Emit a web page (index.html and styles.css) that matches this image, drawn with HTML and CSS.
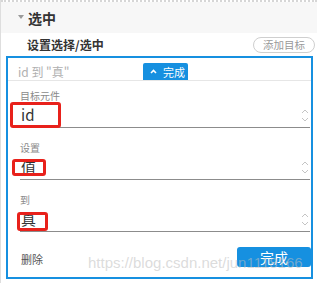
FILE: index.html
```html
<!DOCTYPE html>
<html lang="zh">
<head>
<meta charset="utf-8">
<link rel="stylesheet" href="styles.css">
</head>
<body>
<div class="page">
  <div class="dots"></div>
  <div class="header">
    <svg class="tri" width="6" height="5" viewBox="0 0 6 5"><polygon points="0,0 6,0 3,4" fill="#9a9a9a"/></svg>
    <span class="header-title">选中</span>
  </div>
  <div class="sub">
    <span class="sub-title">设置选择/选中</span>
    <span class="add-btn">添加目标</span>
  </div>
  <div class="panel">
    <div class="summary">
      <span class="summary-text">id 到 "真"</span>
      <span class="tab">
        <svg width="7" height="5" viewBox="0 0 7 5"><polyline points="1,4 3.5,1.5 6,4" fill="none" stroke="#fff" stroke-width="1.6"/></svg>
        <span>完成</span>
      </span>
    </div>
    <div class="field first">
      <div class="label">目标元件</div>
      <div class="value-row">
        <span class="value">id</span>
        <svg class="spin" width="8" height="15" viewBox="0 0 8 15"><polyline points="1,5 4,2 7,5" fill="none" stroke="#c4c4c4" stroke-width="1"/><polyline points="1,10 4,13 7,10" fill="none" stroke="#c4c4c4" stroke-width="1"/></svg>
        <span class="mark mark1"></span>
      </div>
    </div>
    <div class="field">
      <div class="label">设置</div>
      <div class="value-row">
        <span class="value">值</span>
        <svg class="spin" width="8" height="15" viewBox="0 0 8 15"><polyline points="1,5 4,2 7,5" fill="none" stroke="#c4c4c4" stroke-width="1"/><polyline points="1,10 4,13 7,10" fill="none" stroke="#c4c4c4" stroke-width="1"/></svg>
        <span class="mark mark2"></span>
      </div>
    </div>
    <div class="field">
      <div class="label">到</div>
      <div class="value-row">
        <span class="value">真</span>
        <svg class="spin" width="8" height="15" viewBox="0 0 8 15"><polyline points="1,5 4,2 7,5" fill="none" stroke="#c4c4c4" stroke-width="1"/><polyline points="1,10 4,13 7,10" fill="none" stroke="#c4c4c4" stroke-width="1"/></svg>
        <span class="mark mark3"></span>
      </div>
    </div>
    <div class="footer">
      <span class="delete">删除</span>
      <span class="done-btn">完成</span>
    </div>
  </div>
  <div class="watermark">https://blog.csdn.net/jun1118166</div>
</div>
</body>
</html>
```
FILE: styles.css
```css
html, body {
  margin: 0;
  padding: 0;
  background: #fff;
}
body {
  width: 317px;
  height: 283px;
  overflow: hidden;
  font-family: "Noto Sans CJK SC", "Liberation Sans", sans-serif;
  color: #333;
}
.page {
  position: relative;
  height: 283px;
  border-left: 1px solid #dedede;
  box-sizing: border-box;
}
.dots {
  height: 0;
  border-top: 2px dotted #d6d6d6;
}
.header {
  height: 31px;
  background: #f7f7f7;
  display: flex;
  align-items: center;
  padding-left: 17px;
  gap: 4px;
}
.header-title {
  font-size: 14px;
  font-weight: bold;
  line-height: 16px;
  color: #333;
}
.sub {
  height: 23px;
  display: flex;
  align-items: center;
  justify-content: space-between;
  padding-left: 26px;
  padding-right: 2px;
}
.sub-title {
  font-size: 12px;
  font-weight: bold;
  line-height: 14px;
  color: #333;
}
.add-btn {
  width: 62px;
  height: 16px;
  box-sizing: border-box;
  border: 1px solid #cfcfcf;
  border-radius: 8px;
  font-size: 10.5px;
  line-height: 14px;
  color: #999;
  text-align: center;
}
.panel {
  margin-left: 5px;
  width: 307px;
  height: 223px;
  box-sizing: border-box;
  border: 2px solid #1690e0;
  display: flex;
  flex-direction: column;
}
.summary {
  position: relative;
  height: 22px;
  border-bottom: 1px solid #e6e6e6;
  padding-left: 10px;
}
.summary-text {
  font-size: 12px;
  line-height: 17px;
  color: #b0b0b0;
}
.tab {
  position: absolute;
  left: 135px;
  top: 5px;
  width: 45px;
  height: 17px;
  background: #1690e0;
  border-radius: 2px 2px 0 0;
  display: flex;
  align-items: center;
  gap: 6px;
  padding-left: 7px;
  box-sizing: border-box;
  color: #fff;
  font-size: 11px;
  line-height: 14px;
}
.field {
  margin-top: 13px;
  margin-left: 12px;
  margin-right: 1px;
}
.field.first {
  margin-top: 8px;
}
.label {
  height: 14px;
  font-size: 10px;
  line-height: 14px;
  color: #8a8a8a;
}
.value-row {
  position: relative;
  height: 24px;
  border-bottom: 1px solid #8c8c8c;
  display: flex;
  align-items: center;
  justify-content: space-between;
  padding-left: 1px;
  padding-right: 1px;
}
.value {
  font-size: 15px;
  line-height: 20px;
  color: #333;
}
.mark {
  position: absolute;
  border: 3px solid #e8211b;
  border-radius: 3px;
  box-sizing: border-box;
}
.mark1 {
  left: -10px;
  top: -1px;
  width: 51px;
  height: 26px;
}
.mark2 {
  left: -8px;
  top: 4px;
  width: 34px;
  height: 17px;
}
.mark3 {
  left: -3px;
  top: 5px;
  width: 31px;
  height: 19px;
}
.footer {
  display: flex;
  justify-content: space-between;
  align-items: center;
  padding-top: 15px;
  padding-left: 13px;
}
.delete {
  font-size: 11px;
  line-height: 14px;
  color: #555;
  margin-top: 3px;
}
.done-btn {
  width: 74px;
  height: 20px;
  background: #1690e0;
  border-radius: 3px;
  color: #fff;
  font-size: 14px;
  line-height: 20px;
  text-align: center;
}
.watermark {
  position: absolute;
  left: 87px;
  top: 254px;
  font-family: "Liberation Sans", sans-serif;
  font-size: 15px;
  line-height: 18px;
  color: rgba(190, 190, 190, 0.55);
  white-space: nowrap;
  pointer-events: none;
}
```
